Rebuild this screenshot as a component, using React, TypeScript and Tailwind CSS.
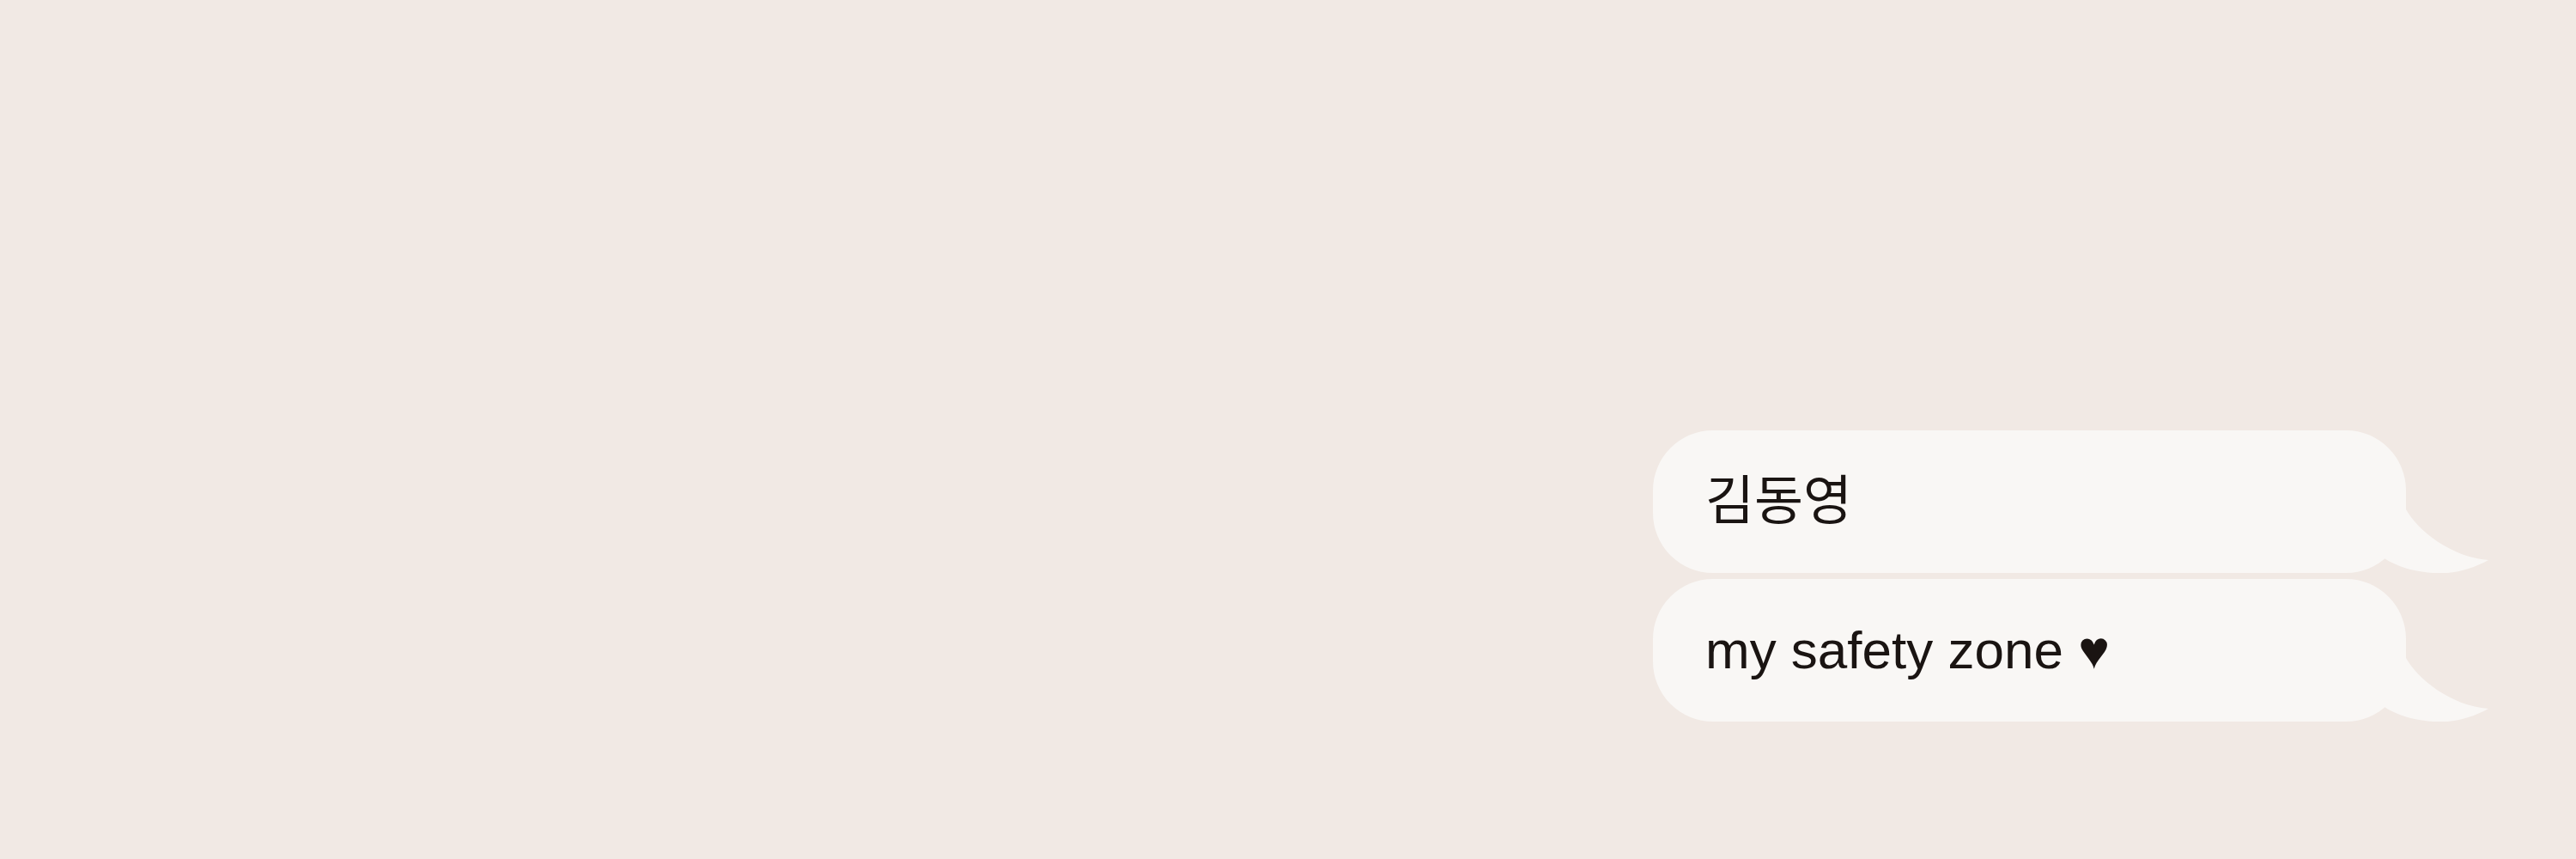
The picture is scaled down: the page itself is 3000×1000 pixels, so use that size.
import React from "react";

function Tail() {
  return (
    <svg
      className="absolute bottom-0 right-[-98px]"
      width="140"
      height="90"
      viewBox="0 0 140 90"
      fill="#f9f7f5"
    >
      <path d="M0 0 L42 0 L42 16 C55 40 95 72 138 75 C118 86 95 92 73 90 C50 88 30 82 17 73 L0 73 Z" />
    </svg>
  );
}

function Bubble({ children }: { children: React.ReactNode }) {
  return (
    <div className="relative w-[877px] h-[166px] rounded-[70px] bg-[#f9f7f5] flex items-center pl-[61px]">
      <span className="text-[62px] leading-none text-[#1a1412]">{children}</span>
      <Tail />
    </div>
  );
}

export default function App() {
  return (
    <div
      className="w-full h-[1000px] bg-[#f1e9e4] flex flex-col items-end pr-[198px] pt-[501px] gap-[7px]"
      style={{ fontFamily: '"Liberation Sans", "Noto Sans CJK KR", sans-serif' }}
    >
      <Bubble>김동영</Bubble>
      <Bubble>my safety zone ♥</Bubble>
    </div>
  );
}
